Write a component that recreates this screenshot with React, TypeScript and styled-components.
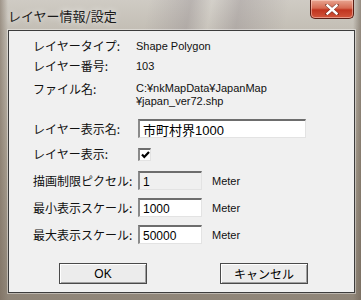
import React, { useState } from 'react';
import styled, { createGlobalStyle } from 'styled-components';

const GlobalStyle = createGlobalStyle`
  html, body {
    margin: 0;
    padding: 0;
    width: 361px;
    height: 300px;
    overflow: hidden;
    background: #8c8276;
  }
  * { box-sizing: border-box; }
`;

const Frame = styled.div`
  width: 361px;
  height: 300px;
  display: flex;
  flex-direction: column;
  padding: 0 6px 7px 8px;
  background:
    linear-gradient(90deg, rgba(120,105,90,0.55) 0px, rgba(255,255,255,0) 8px, rgba(255,255,255,0) 353px, rgba(110,98,85,0.6) 361px),
    linear-gradient(180deg, #cfcbc4 0px, #c3beb5 30px, #a9a092 160px, #8f8578 300px);
  font-family: "Liberation Sans", "Noto Sans CJK JP", sans-serif;
  font-size: 12px;
  color: #000;
`;

const TitleBar = styled.div`
  height: 30px;
  flex: none;
  display: flex;
  align-items: flex-start;
  justify-content: space-between;
  background: linear-gradient(100deg, rgba(255,255,255,0) 40%, rgba(120,110,120,0.25) 52%, rgba(255,255,255,0.1) 58%, rgba(120,110,120,0.25) 66%, rgba(255,255,255,0) 80%);
`;

const Title = styled.div`
  margin-top: 6px;
  font-family: "Noto Sans CJK JP", sans-serif;
  font-size: 13px;
  color: #1a1a1a;
  text-shadow: 0 0 6px rgba(255,255,255,0.9);
`;

const CloseButton = styled.div`
  width: 44px;
  height: 19px;
  margin-right: 1px;
  border: 1px solid #5a1d14;
  border-top: none;
  border-radius: 0 0 5px 5px;
  background: linear-gradient(180deg, #e8a591 0%, #d66a52 45%, #c0341f 55%, #d1553b 100%);
  box-shadow: inset 0 0 0 1px rgba(255,220,210,0.5);
  display: flex;
  align-items: center;
  justify-content: center;
`;

const Client = styled.div`
  flex: 1;
  background: #f0f0f0;
  border: 1px solid #3c3c3c;
  box-shadow: 0 0 0 1px rgba(255,255,255,0.4);
  padding: 8px 0 0 24px;
  display: flex;
  flex-direction: column;
`;

const Row = styled.div<{ $gap: number; $h?: number }>`
  display: grid;
  grid-template-columns: 103px 1fr;
  align-items: center;
  margin-top: ${p => p.$gap}px;
  min-height: ${p => p.$h ?? 14}px;
`;

const Label = styled.div<{ $top?: boolean }>`
  font-family: "Noto Sans CJK JP", sans-serif;
  font-size: 12px;
  line-height: 14px;
  color: #111;
  white-space: nowrap;
  align-self: ${p => (p.$top ? 'start' : 'center')};
`;

const Value = styled.div`
  line-height: 13px;
  font-family: "Liberation Sans", "Noto Sans CJK JP", sans-serif;
  font-size: 11px;
  color: #111;
  white-space: nowrap;
`;

const Field = styled.div`
  display: flex;
  align-items: center;
  gap: 10px;
  padding-left: 2px;
`;

const TextBox = styled.input<{ $w: number }>`
  width: ${p => p.$w}px;
  height: 19px;
  margin: 0;
  padding: 1px 3px 0;
  border-style: solid;
  border-width: 2px 1px 1px 2px;
  border-color: #6d6d6d #e3e3e3 #e3e3e3 #8a8a8a;
  background: #fff;
  font-family: "Liberation Sans", "Noto Sans CJK JP", sans-serif;
  font-size: 12px;
  color: #000;
  outline: none;
  &:read-only { background: #f0f0f0; }
`;

const Unit = styled.span`
  font-family: "Liberation Sans", sans-serif;
  font-size: 11px;
  color: #111;
`;

const CheckBox = styled.div`
  width: 13px;
  height: 13px;
  border-style: solid;
  border-width: 2px 1px 1px 2px;
  border-color: #6d6d6d #e3e3e3 #e3e3e3 #8a8a8a;
  background: #fff;
  display: flex;
  align-items: center;
  justify-content: center;
`;

const ButtonRow = styled.div`
  display: flex;
  margin-top: 19px;
  padding-left: 26px;
  gap: 73px;
`;

const Button = styled.button`
  width: 88px;
  height: 21px;
  margin: 0;
  padding: 0;
  background: #ececec;
  border: 1px solid #4a4a4a;
  box-shadow: inset 1px 1px 0 #ffffff, inset -1px -1px 0 #a0a0a0;
  font-family: "Liberation Sans", "Noto Sans CJK JP", sans-serif;
  font-size: 12px;
  color: #000;
`;

export default function App() {
  const [name, setName] = useState('市町村界1000');
  const [minScale, setMinScale] = useState('1000');
  const [maxScale, setMaxScale] = useState('50000');

  return (
    <Frame>
      <GlobalStyle />
      <TitleBar>
        <Title>レイヤー情報/設定</Title>
        <CloseButton>
          <svg width="14" height="11" viewBox="0 0 14 11">
            <path d="M2 1 L12 10 M12 1 L2 10" stroke="#3a1a16" strokeWidth="3.6" strokeLinecap="square" opacity="0.5" />
            <path d="M2.5 1.5 L11.5 9.5 M11.5 1.5 L2.5 9.5" stroke="#fff" strokeWidth="2.4" strokeLinecap="square" />
          </svg>
        </CloseButton>
      </TitleBar>
      <Client>
        <Row $gap={0}>
          <Label>レイヤータイプ:</Label>
          <Value>Shape Polygon</Value>
        </Row>
        <Row $gap={6}>
          <Label>レイヤー番号:</Label>
          <Value>103</Value>
        </Row>
        <Row $gap={9} $h={26}>
          <Label $top>ファイル名:</Label>
          <Value>
            C:¥nkMapData¥JapanMap
            <br />
            ¥japan_ver72.shp
          </Value>
        </Row>
        <Row $gap={11} $h={19}>
          <Label>レイヤー表示名:</Label>
          <Field>
            <TextBox $w={168} value={name} onChange={e => setName(e.target.value)} style={{ fontSize: 13 }} />
          </Field>
        </Row>
        <Row $gap={9} $h={14}>
          <Label>レイヤー表示:</Label>
          <Field>
            <CheckBox>
              <svg width="9" height="8" viewBox="0 0 9 8">
                <path d="M1 3.5 L3.3 6 L8 1" stroke="#000" strokeWidth="2.2" fill="none" />
              </svg>
            </CheckBox>
          </Field>
        </Row>
        <Row $gap={10} $h={19}>
          <Label>描画制限ピクセル:</Label>
          <Field>
            <TextBox $w={64} value="1" readOnly />
            <Unit>Meter</Unit>
          </Field>
        </Row>
        <Row $gap={8} $h={19}>
          <Label>最小表示スケール:</Label>
          <Field>
            <TextBox $w={64} value={minScale} onChange={e => setMinScale(e.target.value)} />
            <Unit>Meter</Unit>
          </Field>
        </Row>
        <Row $gap={8} $h={19}>
          <Label>最大表示スケール:</Label>
          <Field>
            <TextBox $w={64} value={maxScale} onChange={e => setMaxScale(e.target.value)} />
            <Unit>Meter</Unit>
          </Field>
        </Row>
        <ButtonRow>
          <Button>OK</Button>
          <Button>キャンセル</Button>
        </ButtonRow>
      </Client>
    </Frame>
  );
}
